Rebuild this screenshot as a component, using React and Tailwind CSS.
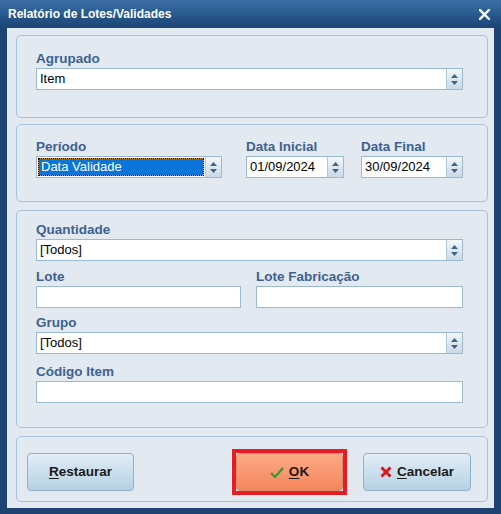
import React from 'react';

// spin arrows on the right of combos and date edits
const Spin = () => (
  <div className="flex h-full w-[16px] flex-col items-center justify-center gap-[3px] border-l border-[#b0c6db] bg-gradient-to-b from-[#f4f7fa] to-[#cbd9e6]">
    <svg width="7" height="4" viewBox="0 0 7 4">
      <path d="M3.5 0L7 4H0z" fill="#3a6591" />
    </svg>
    <svg width="7" height="4" viewBox="0 0 7 4">
      <path d="M0 0h7L3.5 4z" fill="#3a6591" />
    </svg>
  </div>
);

const Field = ({ value, spin, className = '' }) => (
  <div className={`flex h-[22px] border border-[#9cb9d4] bg-white ${className}`}>
    <div className="flex flex-1 items-center pl-[3px] text-[13px] leading-[16px] text-black">{value}</div>
    {spin && <Spin />}
  </div>
);

const Label = ({ children, className = '' }) => (
  <div className={`mb-px h-[16px] text-[13.5px] font-bold leading-[16px] text-[#3e6190] ${className}`}>{children}</div>
);

const Group = ({ className = '', children }) => (
  <div className={`rounded-[5px] border border-[#a8c2da] bg-[#e2e9f1] ${className}`}>{children}</div>
);

export default function App() {
  return (
    <div className="flex h-[514px] w-[501px] flex-col bg-[#1e4271] font-['Liberation_Sans',Arial,sans-serif]">
      {/* title bar */}
      <div className="flex h-[28px] items-center justify-between bg-gradient-to-b from-[#3d6fa6] via-[#285a8e] to-[#1d4475] pl-[8px] pr-[11px]">
        <span className="text-[12px] font-bold text-white">Relatório de Lotes/Validades</span>
        <svg width="11" height="11" viewBox="0 0 11 11">
          <path d="M1 1l9 9M10 1l-9 9" stroke="#ffffff" strokeWidth="2.4" strokeLinecap="square" />
        </svg>
      </div>

      <div className="mx-[7px] mb-[6px] flex flex-1 flex-col bg-[#e2e9f1] pl-[9px] pr-[6px] pt-[7px]">
        <Group className="h-[83px] pl-[19px] pr-[24px] pt-[15px]">
          <Label>Agrupado</Label>
          <Field value="Item" spin />
        </Group>

        <Group className="mt-[6px] h-[78px] pl-[19px] pr-[24px] pt-[14px]">
          <div className="flex">
            <div className="w-[186px]">
              <Label>Período</Label>
              <div className="flex h-[22px] border border-[#9cb9d4] bg-white">
                <div className="flex-1 p-px">
                  <div className="h-full bg-[#e39a2c]">
                    <div className="flex h-full items-center border border-dotted border-black bg-[#0a74da] bg-clip-padding pl-[2px] text-[13px] leading-[16px] text-white">
                      Data Validade
                    </div>
                  </div>
                </div>
                <Spin />
              </div>
            </div>
            <div className="ml-[24px] w-[98px]">
              <Label>Data Inicial</Label>
              <Field value="01/09/2024" spin />
            </div>
            <div className="ml-[17px] w-[102px]">
              <Label>Data Final</Label>
              <Field value="30/09/2024" spin />
            </div>
          </div>
        </Group>

        <Group className="mt-[8px] h-[218px] pl-[19px] pr-[24px] pt-[11px]">
          <Label>Quantidade</Label>
          <Field value="[Todos]" spin />
          <div className="mt-[8px] flex">
            <div className="w-[205px]">
              <Label>Lote</Label>
              <Field />
            </div>
            <div className="ml-[15px] flex-1">
              <Label>Lote Fabricação</Label>
              <Field />
            </div>
          </div>
          <Label className="mt-[7px]">Grupo</Label>
          <Field value="[Todos]" spin />
          <Label className="mt-[10px]">Código Item</Label>
          <Field />
        </Group>

        <Group className="mt-[8px] flex h-[66px] items-center pl-[10px] pt-[6px]">
          <button className="h-[38px] w-[107px] rounded-[4px] border border-[#8fb1cc] bg-gradient-to-b from-[#e1edf6] to-[#b6d1e3] text-[13.5px] font-bold text-[#1a1a1a]">
            <u className="underline-offset-2">R</u>estaurar
          </button>
          <div className="ml-[98px] border-[4px] border-[#e61d25]">
            <button className="flex h-[38px] w-[107px] items-center justify-center gap-[5px] rounded-[4px] border border-[#d98b68] bg-gradient-to-b from-[#fca985] to-[#f5865d] text-[13.5px] font-bold text-[#1a1a1a]">
              <svg width="14" height="11" viewBox="0 0 14 11">
                <path d="M1 6l4 4L13 1" fill="none" stroke="#2f9b33" strokeWidth="2.2" />
              </svg>
              <span>
                <u className="underline-offset-2">O</u>K
              </span>
            </button>
          </div>
          <button className="ml-[16px] flex h-[38px] w-[108px] items-center justify-center gap-[5px] rounded-[4px] border border-[#8fb1cc] bg-gradient-to-b from-[#e1edf6] to-[#b6d1e3] text-[13.5px] font-bold text-[#1a1a1a]">
            <svg width="12" height="12" viewBox="0 0 12 12">
              <path d="M1.5 1.5l9 9M10.5 1.5l-9 9" stroke="#d8161b" strokeWidth="3" />
            </svg>
            <span>
              <u className="underline-offset-2">C</u>ancelar
            </span>
          </button>
        </Group>
      </div>
    </div>
  );
}
